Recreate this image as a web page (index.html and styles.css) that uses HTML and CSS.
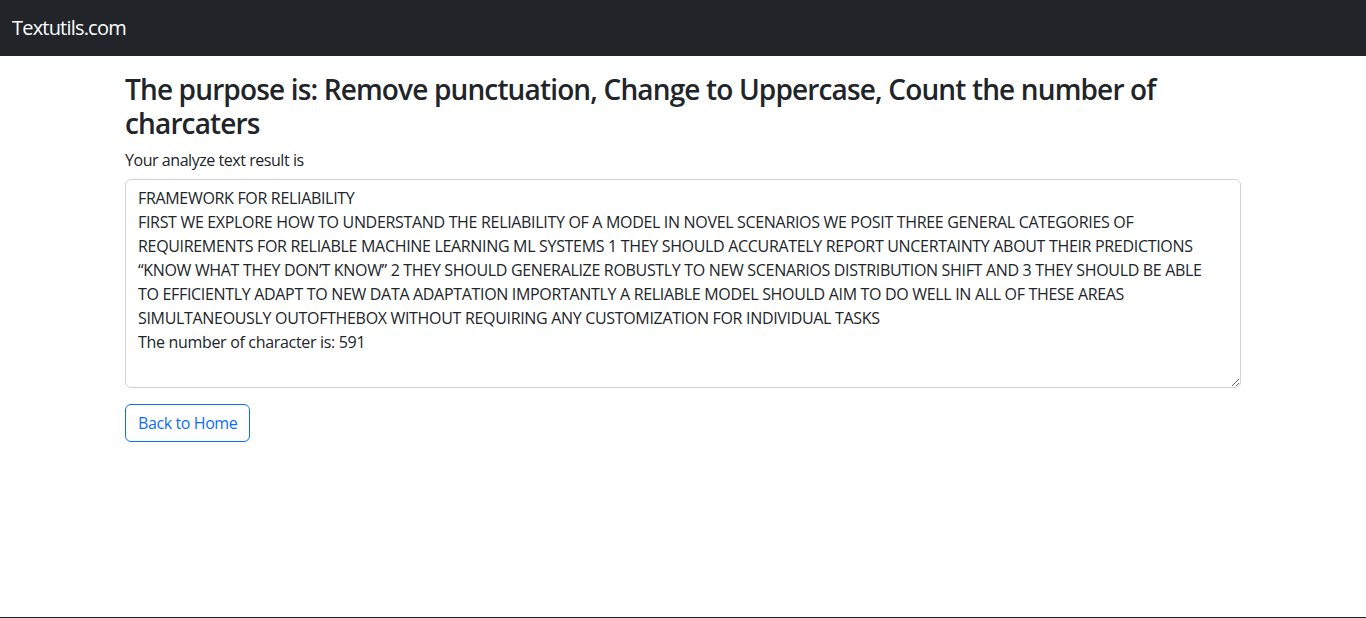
FILE: index.html
```html
<!DOCTYPE html>
<html lang="en">
<head>
<meta charset="utf-8">
<title>Textutils.com</title>
<link rel="stylesheet" href="styles.css">
</head>
<body>
<nav class="navbar">
  <a class="brand" href="#">Textutils.com</a>
</nav>
<main class="main">
  <div class="container">
    <h3 class="title">The purpose is: Remove punctuation, Change to Uppercase, Count the number of charcaters</h3>
    <div class="field">
      <label class="label" for="result">Your analyze text result is</label>
      <textarea class="result" id="result" wrap="off" readonly>FRAMEWORK FOR RELIABILITY
FIRST WE EXPLORE HOW TO UNDERSTAND THE RELIABILITY OF A MODEL IN NOVEL SCENARIOS WE POSIT THREE GENERAL CATEGORIES OF
REQUIREMENTS FOR RELIABLE MACHINE LEARNING ML SYSTEMS 1 THEY SHOULD ACCURATELY REPORT UNCERTAINTY ABOUT THEIR PREDICTIONS
“KNOW WHAT THEY DON’T KNOW” 2 THEY SHOULD GENERALIZE ROBUSTLY TO NEW SCENARIOS DISTRIBUTION SHIFT AND 3 THEY SHOULD BE ABLE
TO EFFICIENTLY ADAPT TO NEW DATA ADAPTATION IMPORTANTLY A RELIABLE MODEL SHOULD AIM TO DO WELL IN ALL OF THESE AREAS
SIMULTANEOUSLY OUTOFTHEBOX WITHOUT REQUIRING ANY CUSTOMIZATION FOR INDIVIDUAL TASKS
The number of character is: 591</textarea>
    </div>
    <a class="btn" href="#">Back to Home</a>
  </div>
</main>
<footer class="footer"></footer>
</body>
</html>
```

FILE: styles.css
```css
* { box-sizing: border-box; }
html, body { margin: 0; padding: 0; }
body {
  font-family: "Open Sans", "Noto Sans", "Liberation Sans", sans-serif;
  font-size: 16px;
  line-height: 1.5;
  color: #212529;
  background: #fff;
}
.navbar {
  background: #212529;
  height: 56px;
  display: flex;
  align-items: center;
  padding: 0 12px;
}
.brand {
  color: #fff;
  text-decoration: none;
  font-size: 20px;
  line-height: 30px;
  letter-spacing: -0.8px;
}
.main {
  height: 561px;
  padding-top: 17px;
}
.container {
  max-width: 1140px;
  margin: 0 auto;
  padding: 0 12px;
}
.title {
  margin: 0 0 8px;
  font-size: 28px;
  font-weight: 600;
  line-height: 1.2;
  letter-spacing: -0.85px;
}
.field { margin-bottom: 16px; }
.label {
  display: block;
  margin-bottom: 7px;
  font-size: 16px;
  letter-spacing: -0.45px;
}
.result {
  display: block;
  width: 100%;
  height: 209px;
  padding: 6px 12px;
  font-family: inherit;
  font-size: 16px;
  line-height: 24px;
  letter-spacing: -0.32px;
  color: #212529;
  background: #fff;
  border: 1px solid #ced4da;
  border-radius: 6px;
  resize: vertical;
  overflow: hidden;
  white-space: pre;
}
.btn {
  display: inline-block;
  padding: 6px 12px;
  font-size: 16px;
  line-height: 24px;
  color: #0d6efd;
  border: 1px solid #0d6efd;
  border-radius: 6px;
  text-decoration: none;
  letter-spacing: -0.4px;
}
.footer {
  height: 1px;
  background: #212529;
}
```
